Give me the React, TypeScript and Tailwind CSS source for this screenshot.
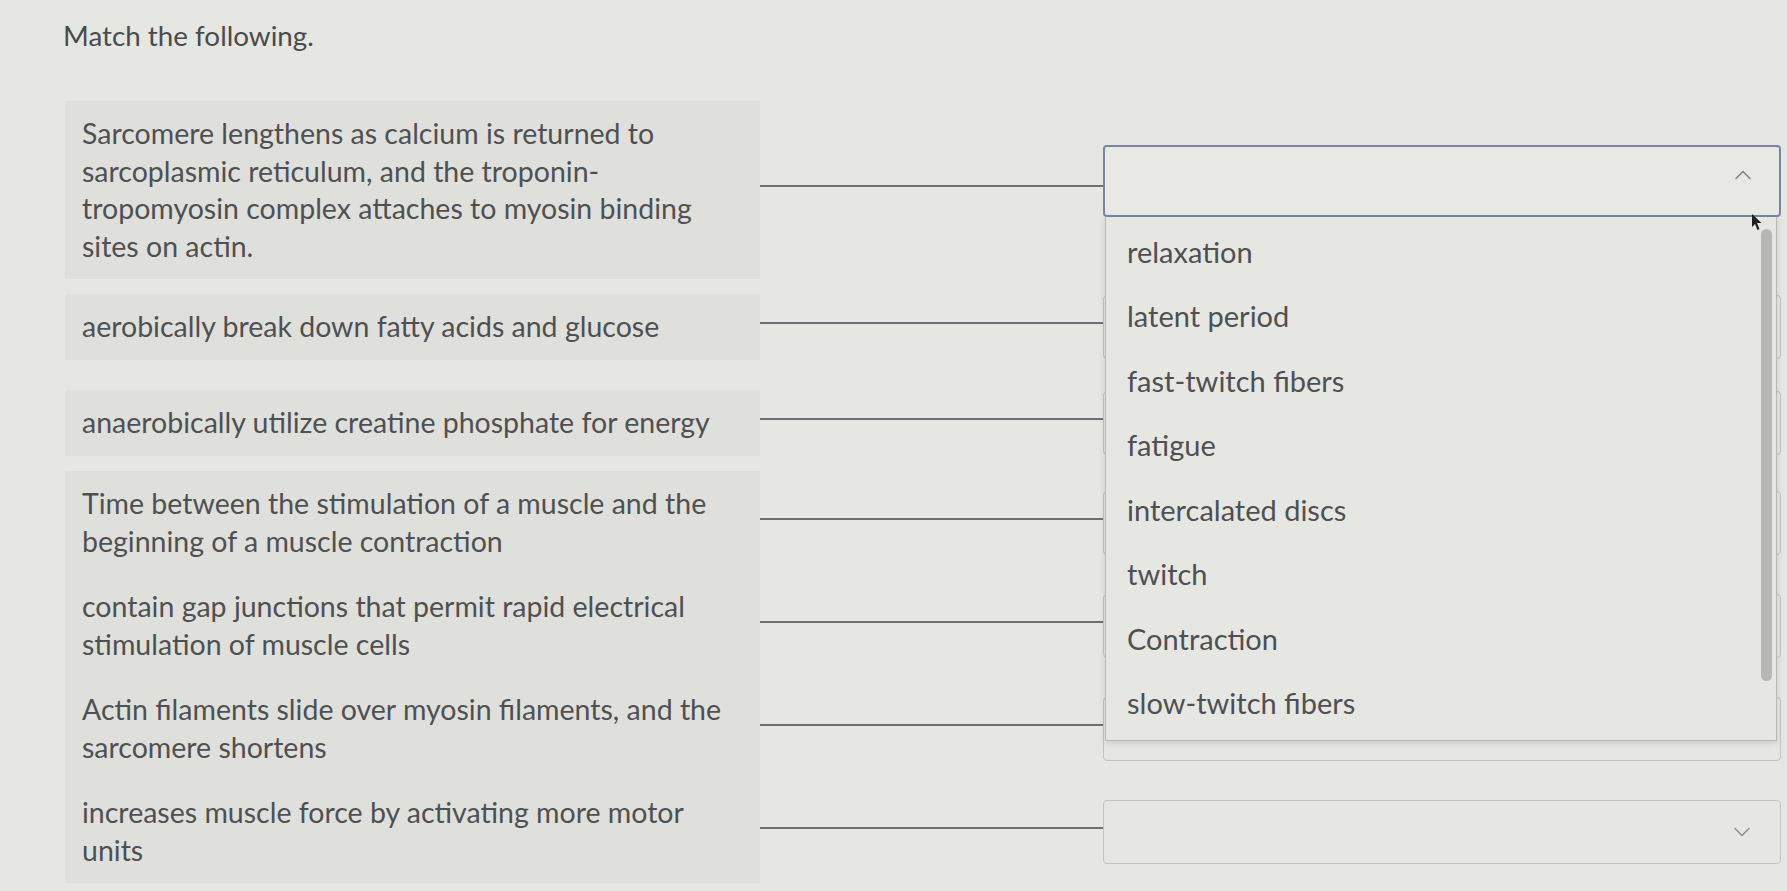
import { ChevronDown, ChevronUp } from 'lucide-react'

type Pair = { id: number; prompt: string[]; open?: boolean }

const pairs: Pair[] = [
  {
    id: 1,
    prompt: [
      'Sarcomere lengthens as calcium is returned to',
      'sarcoplasmic reticulum, and the troponin-',
      'tropomyosin complex attaches to myosin binding',
      'sites on actin.',
    ],
    open: true,
  },
  { id: 2, prompt: ['aerobically break down fatty acids and glucose'] },
  { id: 3, prompt: ['anaerobically utilize creatine phosphate for energy'] },
  { id: 4, prompt: ['Time between the stimulation of a muscle and the', 'beginning of a muscle contraction'] },
  { id: 5, prompt: ['contain gap junctions that permit rapid electrical', 'stimulation of muscle cells'] },
  { id: 6, prompt: ['Actin filaments slide over myosin filaments, and the', 'sarcomere shortens'] },
  { id: 7, prompt: ['increases muscle force by activating more motor', 'units'] },
]

const choices = [
  'relaxation',
  'latent period',
  'fast-twitch fibers',
  'fatigue',
  'intercalated discs',
  'twitch',
  'Contraction',
  'slow-twitch fibers',
]

const ChoiceList = () => (
  <div className="absolute left-[2px] right-[4px] top-full z-10 h-[524px] border border-t-0 border-[#b9bab6] bg-[#e6e7e3] shadow-[0_2px_6px_rgba(0,0,0,0.12)]">
    <ul className="pt-[2px]">
      {choices.map((choice) => (
        <li key={choice} className="flex h-[64.5px] items-center pl-[21px] text-[29px]">
          {choice}
        </li>
      ))}
    </ul>
    {/* scrollbar */}
    <div className="absolute right-[4px] top-[12px] h-[452px] w-[11px] rounded-full bg-[#b7b8b5]" />
  </div>
)

const Select = ({ open }: { open?: boolean }) => (
  <div className={open ? 'relative -mt-[18px] w-[678px]' : 'relative w-[678px]'}>
    <div
      className={
        open
          ? 'flex h-[72px] items-start justify-end rounded-[4px] border-2 border-[#7d83a0] bg-[#e8e9e5] pr-[22px] pt-[14px]'
          : 'flex h-[64px] items-center justify-end rounded-[4px] border border-[#c3c4c0] bg-[#e6e7e3] pr-[24px]'
      }
    >
      {open ? (
        <ChevronUp className="h-[28px] w-[28px] text-[#7a7b7d]" strokeWidth={1.2} />
      ) : (
        <ChevronDown className="h-[28px] w-[28px] text-[#8a8b8d]" strokeWidth={1.2} />
      )}
    </div>
    {open && (
      <>
        <ChoiceList />
        {/* mouse pointer */}
        <svg className="absolute right-[18px] top-[68px] z-20 h-[18px] w-[12px]" viewBox="0 0 12 18">
          <path d="M1 1 L1 14 L4 11 L6.5 17 L8.5 16 L6 10 L10.5 10 Z" fill="#1d1d22" />
        </svg>
      </>
    )}
  </div>
)

export default function App() {
  return (
    <div
      className="min-h-[891px] w-[1787px] bg-[#e6e7e2] pl-[63px] pt-[17px] text-[28.5px] text-[#4f5052]"
      style={{ fontFamily: 'Lato, "Open Sans", sans-serif' }}
    >
      <h1 className="text-[27.8px] leading-[38px] text-[#4a4b4d]">Match the following.</h1>
      <div className="mt-[46px] flex flex-col">
        {pairs.map((pair) => (
          <div key={pair.id} className="flex min-h-[96px] items-center">
            <div className="ml-[2px] w-[695px] whitespace-nowrap bg-[#dfe0dc] py-[14px] pl-[17px] leading-[37.5px]">
              {pair.prompt.map((line) => (
                <div key={line}>{line}</div>
              ))}
            </div>
            <div className="-mt-[8px] h-[2px] w-[343px] bg-[#6d6f72]" />
            <Select open={pair.open} />
          </div>
        ))}
      </div>
    </div>
  )
}
